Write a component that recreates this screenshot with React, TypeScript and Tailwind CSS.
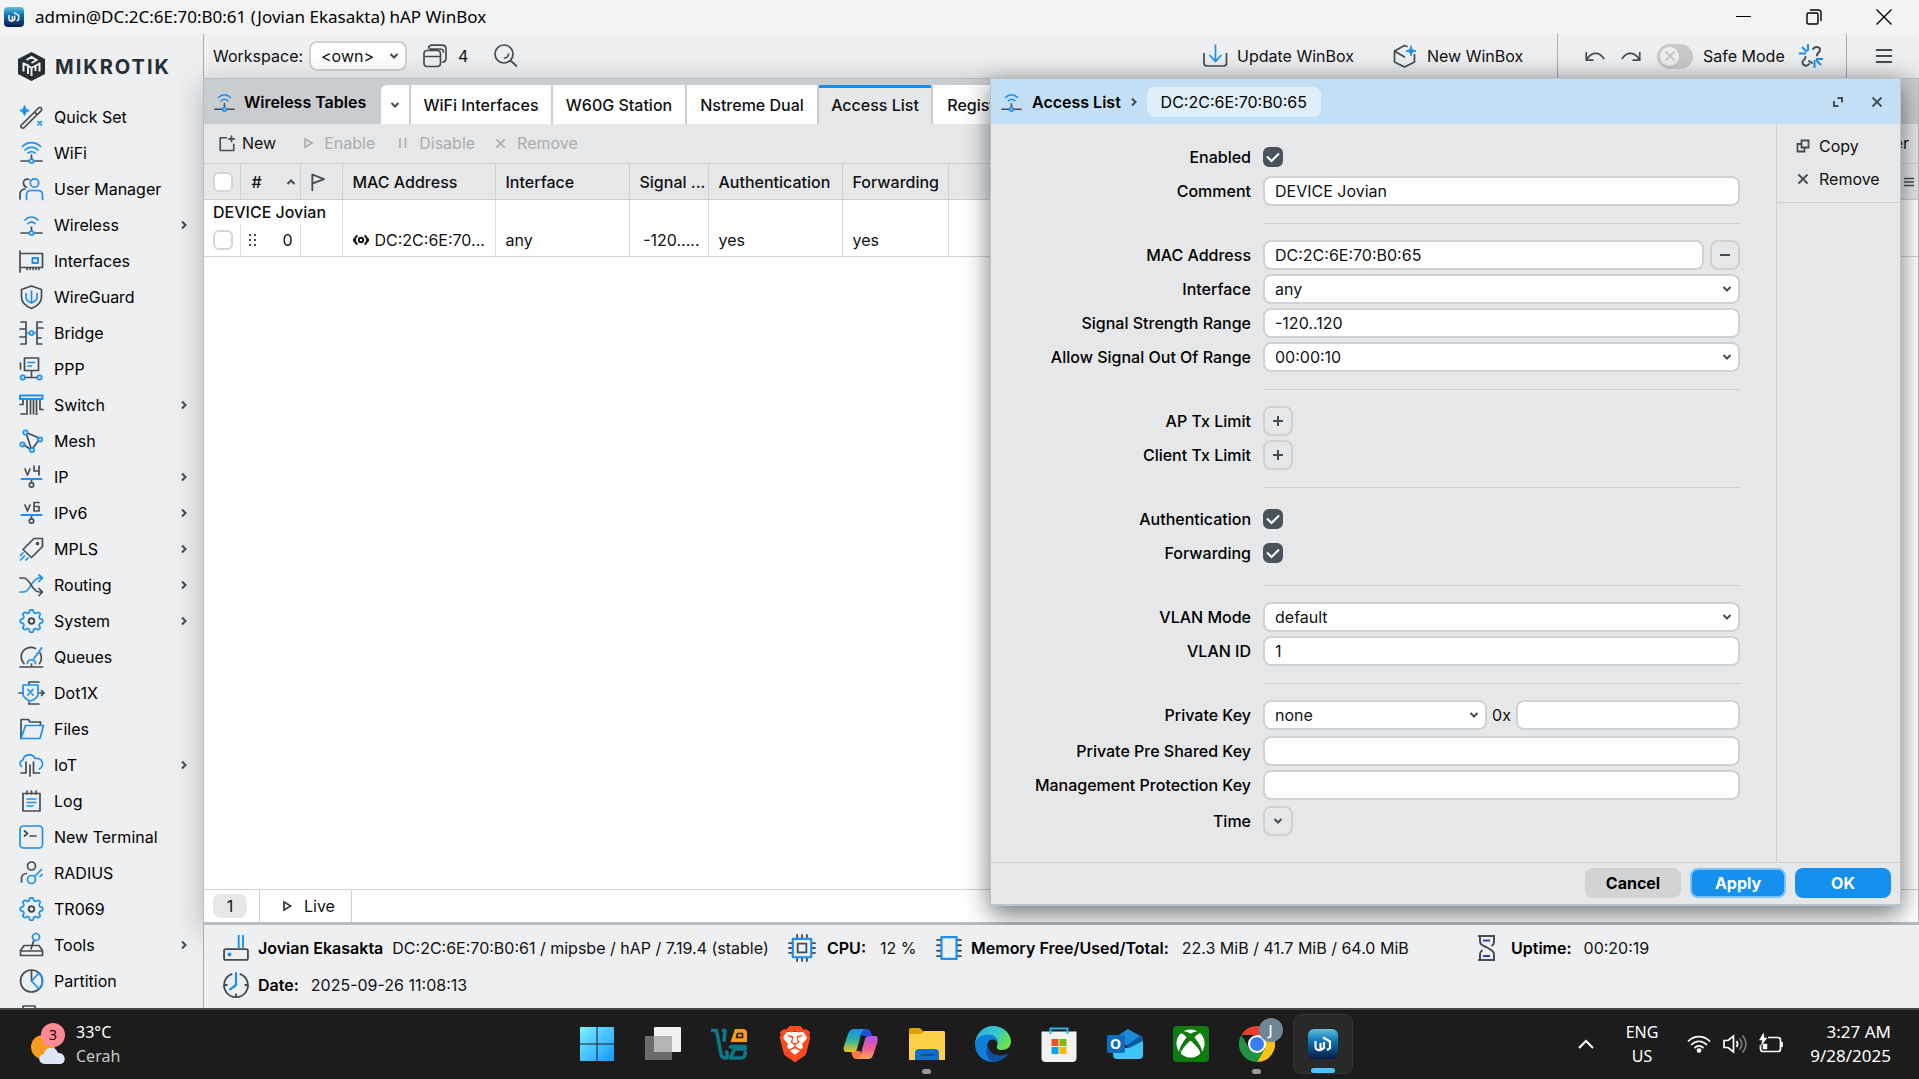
import React from "react";
import { SiBrave } from "react-icons/si";
import { FaXbox } from "react-icons/fa";

const DARK = "#434d56";
const BLUE = "#1b90f0";

type IconProps = { children: React.ReactNode; className?: string };

function Icon({ children, className = "h-6 w-6" }: IconProps) {
  return (
    <svg
      viewBox="0 0 24 24"
      className={`shrink-0 overflow-visible ${className}`}
      fill="none"
      stroke={DARK}
      strokeWidth="1.7"
      strokeLinecap="round"
      strokeLinejoin="round"
      aria-hidden="true"
    >
      {children}
    </svg>
  );
}

function AntennaIcon({ className, wide = false }: { className?: string; wide?: boolean }) {
  return (
    <Icon className={className}>
      <path d="M2 20h8M15 20h8M12.5 14v4" />
      <g stroke={BLUE}>
        {wide ? (
          <path d="M3.500 5.500C8.500 .3 16.500 .3 21.500 5.500M6 9c3.800-3.800 9.200-3.800 13 0M9 12.200c2.200-2 4.800-2 7 0" />
        ) : (
          <path d="M6 7c3.800-4 9.200-4 13 0M9 10.700c2.200-2.200 4.800-2.200 7 0" />
        )}
        <circle cx="12.500" cy="20" r="2" />
      </g>
    </Icon>
  );
}

// outline of an eight-tooth gear, sampled round the circle
const gearPoints = Array.from({ length: 96 }, (_, i) => {
  const a = (i / 96) * Math.PI * 2;
  const r = 9.9 + 1.4 * Math.tanh(2.2 * Math.cos(8 * a));
  return `${(12.5 + r * Math.cos(a)).toFixed(2)},${(12 + r * Math.sin(a)).toFixed(2)}`;
}).join(" ");

function GearIcon() {
  return (
    <Icon>
      <polygon points={gearPoints} stroke={BLUE} />
      <circle cx="12.500" cy="12" r="2.800" strokeWidth="2" />
    </Icon>
  );
}

const quickSetIcon = (
  <Icon>
    <path d="M2.500 20 19.500 3a1.800 1.800 0 0 1 2.700 2.700L5.200 22.500a1.800 1.800 0 0 1-2.700-2.500zM15.500 7l2.700 2.700" />
    <path stroke={BLUE} strokeWidth="1.500" fill={BLUE} d="M5.500 1c.4 3 1.400 4 4.200 4.500C7 6 6 7 5.500 10 5 7 4 6 1.300 5.500 4 5 5 4 5.500 1z" />
    <path stroke={BLUE} d="m19 16.500 3.500 3.500M22.500 16.500 19 20" />
  </Icon>
);

const usersIcon = (
  <Icon>
    <path d="M10 2.500C6.500 1 4 3.500 4.500 6.500c.3 2 1.500 3.300 3 3.700M1 22v-4.500C1 14 3 12.300 6 12" />
    <g stroke={BLUE}>
      <circle cx="15.500" cy="6" r="4.200" />
      <path d="M7.500 22.500V18c0-2.800 2-4.500 4.500-4.500h7c2.700 0 4.500 1.700 4.500 4.500v4.500" />
    </g>
  </Icon>
);

const interfacesIcon = (
  <Icon>
    <path d="M1 2v21M1 4.500h22.500v14H20v2M1 18.500h7v2M11 18.500v2M14 18.500v2M17 18.500v2M8 18.500h12" />
    <path stroke={BLUE} strokeWidth="2" d="M13.500 9h5.500v5h-5.500z" />
  </Icon>
);

const wireGuardIcon = (
  <Icon>
    <path d="M12.500 1 22.500 4.500V12c0 5.500-4 9-10 11.500C6.500 21 2.500 17.500 2.500 12V4.500z" />
    <path stroke={BLUE} d="M12.500 6v12M7 8.500V12c0 3 2.500 5 5.500 6 3-1 5.500-3 5.500-6V8.500" />
  </Icon>
);

const bridgeIcon = (
  <Icon>
    <path d="M2 1h5v22H2M1 8h6M1 16h6M23 1h-5v22h5M18 7h6M18 17h4" />
    <g stroke={BLUE}>
      <path d="M8 12h2M15 12h2" />
      <circle cx="12.500" cy="12" r="2" />
    </g>
  </Icon>
);

const pppIcon = (
  <Icon>
    <path d="M5.500 1h14v12.500h-14zM1.500 6v6M12.500 14v5M6 20.500h12" />
    <g stroke={BLUE}>
      <path d="M9 5.500h6.500M9 9h3.500" />
      <circle cx="3.700" cy="20.500" r="2.200" />
      <circle cx="20.500" cy="20.500" r="2.200" />
    </g>
  </Icon>
);

const switchIcon = (
  <Icon>
    <path d="M4 7v4.500H1M8 7v14H2M11.500 7v14M14.500 7v14M17.500 7v14M21 7v9.500h3M17 21h1" />
    <path stroke={BLUE} strokeWidth="2" d="M1 2.500h22.500V6H1z" />
  </Icon>
);

const meshIcon = (
  <Icon>
    <path d="M7.500 5.500 12 19M8.500 4l11.500 5M19.500 11.500 14 19M5 16l6 4" />
    <g stroke={BLUE}>
      <circle cx="6.500" cy="3.500" r="2.200" />
      <circle cx="21" cy="10.500" r="2.200" />
      <circle cx="3.500" cy="15.500" r="2.200" />
      <circle cx="13" cy="21" r="2.200" />
    </g>
  </Icon>
);

const ipIcon = (
  <Icon>
    <path d="m6 4 2.500 6L11 4M15 1v5h5M20 1v9M12.500 15v2" />
    <circle cx="12.500" cy="20" r="2.200" />
    <path stroke={BLUE} strokeWidth="2" d="M2.500 14h20" />
  </Icon>
);

const ipv6Icon = (
  <Icon>
    <path d="m6 4 2.500 6L11 4M20 1.500h-5V10h5V5.500h-5M12.500 15v2" />
    <circle cx="12.500" cy="20" r="2.200" />
    <path stroke={BLUE} strokeWidth="2" d="M2.500 14h20" />
  </Icon>
);

const mplsIcon = (
  <Icon>
    <path d="M15 1.500h8.500v8L12.500 20.500 4 12.500z" />
    <circle cx="18.500" cy="6.500" r="1" />
    <path stroke={BLUE} d="M4 16l-2.500 2.500M5.500 19l-4 4M9 21l-2 2" />
  </Icon>
);

const routingIcon = (
  <Icon>
    <path stroke={BLUE} d="M1 19h4c6 0 8-14 15-14h3M20 2l3.500 3L20 8.500" />
    <path d="M1 5h4c6 0 8 14 15 14h3M20 15.500l3.500 3.500L20 22.500" />
  </Icon>
);

const queuesIcon = (
  <Icon>
    <path d="M5 18.500C.5 13 1.500 6 8 3.200c3-1.200 6-.9 8.500.3M21 8c2 3.500 1.700 7.500-.5 10.500M1 22h22.500M12.500 19v3" />
    <path stroke={BLUE} d="M8.500 18.500c0-5 7.500-5 8 0M15 13.500 22.500 3" />
  </Icon>
);

const dot1xIcon = (
  <Icon>
    <path d="M10 3V1h10M10 21v2h10M0 12h4M20.500 12h4M22.500 9.500 25 12l-2.500 2.500" />
    <path stroke={BLUE} d="M4 4h15v8.500c0 3-3 6-7.500 7.500C7 18.500 4 15.500 4 12.500zM9 8.500l5 5.500M14 8.500 9 14" />
  </Icon>
);

const filesIcon = (
  <Icon>
    <path d="M2 21.500V2.500h7.500L11 5h10.500v3" />
    <path stroke={BLUE} d="M6.500 8.500h18l-3.500 13H2z" />
  </Icon>
);

const iotIcon = (
  <Icon>
    <path d="M7 9v11H2M11 12v11M14.500 9v11h6" />
    <path stroke={BLUE} d="M2.500 13.500C0 11 1 7.500 4 7c1-6.500 10-6.500 12-1.500 5-1 8 2.500 7.500 6-.2 2-1.300 3.500-3 4.500" />
  </Icon>
);

const logIcon = (
  <Icon>
    <path d="M4 4.500h17v17.500H4zM8 2v3M12.500 2v3M17 2v3" />
    <path stroke={BLUE} strokeWidth="1.500" d="M8 10h9M8 13.500h9M8 17h6" />
  </Icon>
);

const terminalIcon = (
  <Icon>
    <rect stroke={BLUE} x="1" y="1" width="22.500" height="22" rx="3.500" />
    <path d="m5.500 6 3 2.500-3 2.500M11 11h6" />
  </Icon>
);

const radiusIcon = (
  <Icon>
    <circle cx="12.500" cy="5" r="4" />
    <path d="M2.500 21v-3c0-3 2-5.500 5-5.500" />
    <g stroke={BLUE}>
      <circle cx="12.500" cy="18.500" r="4" />
      <path d="m16 15 6.500-6.500M21 15.500l2-2" />
    </g>
  </Icon>
);

const toolsIcon = (
  <Icon>
    <path d="M1.500 17.500 5 12.500h15l3.500 5v5h-22zM1.500 18h22M12 16l3-9" />
    <circle stroke={BLUE} cx="17" cy="4" r="3.500" />
  </Icon>
);

const partitionIcon = (
  <Icon>
    <circle cx="12.500" cy="12" r="11" />
    <path d="M12.500 1.500V12" />
    <path stroke={BLUE} d="M20 4 12.500 12l7.500 8c4.500-4.500 4.500-11.500 0-16z" />
  </Icon>
);

const clippedIcon = (
  <Icon>
    <path d="M4 1h12v22H4zM16 4h4v19" />
  </Icon>
);

type MenuItem = { label: string; icon: React.ReactNode; nested?: boolean };

const menu: MenuItem[] = [
  { label: "Quick Set", icon: quickSetIcon },
  { label: "WiFi", icon: <AntennaIcon wide /> },
  { label: "User Manager", icon: usersIcon },
  { label: "Wireless", icon: <AntennaIcon />, nested: true },
  { label: "Interfaces", icon: interfacesIcon },
  { label: "WireGuard", icon: wireGuardIcon },
  { label: "Bridge", icon: bridgeIcon },
  { label: "PPP", icon: pppIcon },
  { label: "Switch", icon: switchIcon, nested: true },
  { label: "Mesh", icon: meshIcon },
  { label: "IP", icon: ipIcon, nested: true },
  { label: "IPv6", icon: ipv6Icon, nested: true },
  { label: "MPLS", icon: mplsIcon, nested: true },
  { label: "Routing", icon: routingIcon, nested: true },
  { label: "System", icon: <GearIcon />, nested: true },
  { label: "Queues", icon: queuesIcon },
  { label: "Dot1X", icon: dot1xIcon },
  { label: "Files", icon: filesIcon },
  { label: "IoT", icon: iotIcon, nested: true },
  { label: "Log", icon: logIcon },
  { label: "New Terminal", icon: terminalIcon },
  { label: "RADIUS", icon: radiusIcon },
  { label: "TR069", icon: <GearIcon /> },
  { label: "Tools", icon: toolsIcon, nested: true },
  { label: "Partition", icon: partitionIcon },
];

function Chevron({ className = "" }: { className?: string }) {
  return (
    <svg viewBox="0 0 10 10" className={`h-[10px] w-[10px] shrink-0 ${className}`} fill="none" stroke={DARK} strokeWidth="2" aria-hidden="true">
      <path d="M1.500 3 5 6.500 8.500 3" />
    </svg>
  );
}

function Cross({ className = "h-3 w-3" }: { className?: string }) {
  return (
    <svg viewBox="0 0 12 12" className={`shrink-0 ${className}`} fill="none" stroke="currentColor" strokeWidth="1.800" aria-hidden="true">
      <path d="m1.500 1.500 9 9M10.500 1.500l-9 9" />
    </svg>
  );
}

function WinBoxMark({ className }: { className: string }) {
  return (
    <svg viewBox="0 0 30 30" className={`shrink-0 ${className}`} aria-hidden="true">
      <defs>
        <linearGradient id="winbox" x1="0" y1="0" x2="0" y2="1">
          <stop offset="0" stopColor="#5fc0dc" />
          <stop offset=".4" stopColor="#1173b4" />
          <stop offset="1" stopColor="#071a45" />
        </linearGradient>
      </defs>
      <rect width="30" height="30" rx="6" fill="url(#winbox)" />
      <path d="M7.500 12v5.500c0 2.500 2 4 5 3.500V14M16 13v6l-2.500 1.500M15 8.500l7 4V19l-3 2" fill="none" stroke="#fff" strokeWidth="2.200" />
    </svg>
  );
}

function TitleBar() {
  return (
    <header className="flex h-[34px] shrink-0 items-center bg-[#f3f3f3] font-['Noto_Sans',sans-serif] text-black">
      <div className="flex flex-1 items-center gap-[11px] pl-1">
        <WinBoxMark className="h-5 w-5" />
        <h1 className="text-[17px]">admin@DC:2C:6E:70:B0:61 (Jovian Ekasakta) hAP WinBox</h1>
      </div>
      <button aria-label="Minimize" className="flex h-full w-[70px] items-center justify-center">
        <svg viewBox="0 0 16 16" className="h-4 w-4" stroke="#000" fill="none"><path d="M0 7.500h15" /></svg>
      </button>
      <button aria-label="Restore" className="flex h-full w-[70px] items-center justify-center">
        <svg viewBox="0 0 16 16" className="h-4 w-4" stroke="#000" strokeWidth="1.400" fill="none">
          <rect x="1" y="4" width="11" height="11" rx="1.500" />
          <path d="M4 1h8.500A2.500 2.500 0 0 1 15 3.500V12" />
        </svg>
      </button>
      <button aria-label="Close" className="flex h-full w-[70px] items-center justify-center">
        <svg viewBox="0 0 16 16" className="h-4 w-4" stroke="#000" strokeWidth="1.400" fill="none"><path d="m.5.500 15 15M15.500.500l-15 15" /></svg>
      </button>
    </header>
  );
}

function Sidebar() {
  return (
    <aside className="flex w-[203px] shrink-0 flex-col overflow-hidden bg-[#eeeff1]">
      <div className="flex h-[65px] shrink-0 items-center gap-[10px] pl-[18px]">
        <svg viewBox="0 0 27 29" className="h-[29px] w-[27px] shrink-0" aria-hidden="true">
          <path d="M13.500 0 27 7v15l-13.500 7L0 22V7z" fill="#262e36" />
          <path d="M5.500 10.500v9M5.500 11.500l4.500 2v8.500M10 13.500l3.500 2.500v8M21.500 10.500v9M21.500 11.500l-8 4.500M17.500 14v5M8.500 8l5-3 5 3-5 3" stroke="#eeeff1" strokeWidth="2" fill="none" />
        </svg>
        <span className="text-xl font-bold tracking-widest text-[#262e36]">MIKROTIK</span>
      </div>
      <nav>
        <ul>
          {menu.map((item) => (
            <li key={item.label}>
              <a href="#" className="flex h-9 items-center pl-[19px] pr-[14px] text-black">
                {item.icon}
                <span className="ml-[11px] flex-1">{item.label}</span>
                {item.nested && <Chevron className="-rotate-90" />}
              </a>
            </li>
          ))}
          <li className="h-9 pl-[19px] pt-[6px]">{clippedIcon}</li>
        </ul>
      </nav>
    </aside>
  );
}

function TopToolbar() {
  return (
    <div className="flex h-11 shrink-0 items-center border-l border-[#a9adb2] bg-[#eeeff1] pl-[9px]">
      <label htmlFor="workspace" className="w-24">Workspace:</label>
      <div className="relative w-[98px]">
        <select id="workspace" className="block h-[30px] w-full appearance-none rounded-lg border-2 border-[#cfd2d5] bg-white pl-[10px]">
          <option>&lt;own&gt;</option>
        </select>
        <Chevron className="pointer-events-none absolute right-2 top-[10px]" />
      </div>
      <button className="ml-4 flex items-center gap-[11px]">
        <Icon>
          <path d="M1 9.500C1 7.500 2.500 6.500 4 6.500h10c2 0 3.500 1.500 3.500 3.500v9c0 2-1.500 3.500-3.500 3.500H4.500C2.500 22.500 1 21 1 19zM1 12.500h16.500M5.500 4C6 2 7 1.200 9 1.200h10c2.500 0 4 1.500 4 3.500v9.500c0 2-1 3.500-3 4M7 5h10c2 0 3.500 1.200 3.500 3" />
        </Icon>
        4
      </button>
      <button aria-label="Search" className="ml-[26px]">
        <Icon>
          <circle cx="10" cy="10" r="9" />
          <path d="m16.500 16.500 6 5.500M14.500 10c0 2-1.500 4-4 4" />
        </Icon>
      </button>
      <div className="ml-auto flex h-full items-center">
        <button className="flex w-[190px] items-center gap-[10px]">
          <Icon>
            <path d="M1 9v10c0 2 1 3 3 3h16.500c2 0 3-1 3-3V9" strokeLinecap="butt" />
            <path stroke={BLUE} d="M12.500 1v16M7 11.500l5.500 6 5.500-6" />
          </Icon>
          Update WinBox
        </button>
        <button className="flex w-[164px] items-center gap-[10px]">
          <Icon>
            <path d="M14 2.500 11.500 1.500 1.500 7v11l10 5 10-5v-7.500M1.500 7l10 6" />
            <path stroke={BLUE} fill={BLUE} strokeWidth="1" d="M18 2c.5 3.500 1.500 4 5 5-3.500.500-4.500 1.500-5 5-.5-3.500-1.500-4.500-5-5 3.500-1 4.500-1.500 5-5z" />
          </Icon>
          New WinBox
        </button>
        <div className="flex h-full items-center border-l border-[#a9adb2] pl-[27px]">
          <button aria-label="Undo">
            <Icon className="h-5 w-5"><path strokeWidth="2" d="M1.500 8v9h8M2 16.500C7 7 17 6 22.500 15" /></Icon>
          </button>
          <button aria-label="Redo" className="ml-4">
            <Icon className="h-5 w-5"><path strokeWidth="2" d="M22.500 8v9h-8M22 16.500C17 7 7 6 1.500 15" /></Icon>
          </button>
          <label className="ml-4 flex w-[142px] items-center gap-[10px]">
            <span className="relative flex">
              <input type="checkbox" role="switch" className="h-[25px] w-9 appearance-none rounded-full bg-[#c8cacc]" />
              <span className="pointer-events-none absolute left-[3px] top-[3px] flex h-[19px] w-[19px] items-center justify-center rounded-full bg-[#eeeff1] text-[#c8cacc]">
                <Cross />
              </span>
            </span>
            Safe Mode
          </label>
          <button aria-label="Connection">
            <Icon>
              <path strokeWidth="2" d="M14 5c2-3 7-2.500 7 1 0 2.500-3 2.500-3 5.500M10 20c-2 3-7 1.500-6.500-2 .3-2 3-2.500 3-5M13 19l-3-2" />
              <path stroke={BLUE} strokeWidth="2" strokeLinecap="butt" d="M9 0v7M3 3l5 5M0 9.500h7M15.500 16v8M17 16l5 5M17 15h7" />
            </Icon>
          </button>
        </div>
        <div className="ml-[23px] flex h-full items-center border-l border-[#a9adb2] pl-[29px] pr-[27px]">
          <button aria-label="Menu">
            <svg viewBox="0 0 16 16" className="h-4 w-4" stroke={DARK} strokeWidth="2" aria-hidden="true"><path d="M0 2h16M0 8h16M0 14h16" /></svg>
          </button>
        </div>
      </div>
    </div>
  );
}

function RowCheck({ label }: { label: string }) {
  return (
    <input type="checkbox" aria-label={label} className="block h-5 w-5 appearance-none rounded-md border-2 border-[#d3d5d7] bg-white" />
  );
}

function WirelessTables() {
  return (
    <section className="flex h-full flex-col border border-b-[3px] border-[#b6bcc2] bg-white shadow-[0_6px_30px_rgba(0,0,0,0.25)]">
      <div className="flex h-[45px] shrink-0 items-end gap-[2px] overflow-hidden bg-[#cacdd0]">
        <h2 className="flex h-full w-[175px] items-center gap-[9px] pl-[9px] font-semibold text-black">
          <AntennaIcon className="h-[22px] w-[22px]" />
          Wireless Tables
        </h2>
        <button aria-label="More tables" className="flex h-[39px] w-7 items-center justify-center rounded-tl-md bg-white"><Chevron /></button>
        <button className="h-[39px] w-[140px] bg-white font-medium">WiFi Interfaces</button>
        <button className="h-[39px] w-[132px] bg-white font-medium">W60G Station</button>
        <button className="h-[39px] w-[130px] bg-white font-medium">Nstreme Dual</button>
        <button className="h-[39px] w-28 border-t-[3px] border-[#1590ee] bg-[#e6e7e9] pb-[3px] font-medium">Access List</button>
        <button className="h-[39px] w-[120px] bg-white font-medium">Registration</button>
      </div>

      <div className="flex h-[39px] shrink-0 items-center gap-5 bg-[#e6e7e9] pb-[1px] pl-[14px] pr-[9px]">
        <button className="mr-1 flex items-center gap-[6px]">
          <Icon className="h-[18px] w-[18px]"><path strokeWidth="2.200" strokeLinecap="butt" d="M12 5H3v17h18v-9M18 2v9M13.500 6.500h9" /></Icon>
          New
        </button>
        <button className="flex items-center gap-2 text-[#abadb0]" disabled>
          <svg viewBox="0 0 16 16" className="h-4 w-4" fill="none" stroke="currentColor" strokeWidth="1.700"><path d="M5 4v8l7-4z" /></svg>
          Enable
        </button>
        <button className="flex items-center gap-2 text-[#abadb0]" disabled>
          <svg viewBox="0 0 16 16" className="h-4 w-4" stroke="currentColor" strokeWidth="1.700"><path d="M5 3v10M10.500 3v10" /></svg>
          Disable
        </button>
        <button className="flex items-center gap-[11px] text-[#abadb0]" disabled>
          <Cross className="h-[11px] w-[11px]" />
          Remove
        </button>
        <button className="ml-auto">Filter</button>
      </div>

      <table className="w-full table-fixed border-y border-[#d0d2d4] text-left">
        <colgroup>
          <col className="w-9" />
          <col className="w-[60px]" />
          <col className="w-[42px]" />
          <col className="w-[153px]" />
          <col className="w-[134px]" />
          <col className="w-[79px]" />
          <col className="w-[134px]" />
          <col className="w-[106px]" />
          <col />
        </colgroup>
        <thead className="h-9 border-b border-[#cdcfd1] bg-[#e6e7e9]">
          <tr className="divide-x divide-[#cdcfd1]">
            <th className="pl-[9px]"><RowCheck label="Select all" /></th>
            <th className="pl-[11px]">
              <span className="flex items-center justify-between pr-1 font-medium"># <Chevron className="rotate-180" /></span>
            </th>
            <th className="pl-2">
              <Icon className="h-5 w-5"><path strokeWidth="2.200" d="M4 22V3l14 5.500L4 14" /></Icon>
            </th>
            <th className="pl-[10px] font-medium">MAC Address</th>
            <th className="pl-[10px] font-medium">Interface</th>
            <th className="whitespace-nowrap pl-[10px] font-medium">Signal ...</th>
            <th className="pl-[10px] font-medium">Authentication</th>
            <th className="pl-[10px] font-medium">Forwarding</th>
            <th className="pr-1">
              <svg viewBox="0 0 10 10" className="ml-auto h-[10px] w-[10px]" stroke={DARK} strokeWidth="1.500" aria-hidden="true"><path d="M0 1.500h10M0 5h10M0 8.500h10" /></svg>
            </th>
          </tr>
        </thead>
        <tbody>
          <tr className="h-6 divide-x divide-[#dcdee0]">
            <td colSpan={3} className="whitespace-nowrap pl-[9px] font-medium">DEVICE Jovian</td>
            <td /><td /><td /><td /><td /><td />
          </tr>
          <tr className="h-8 divide-x divide-[#dcdee0]">
            <td className="pl-[9px]"><RowCheck label="Select row 0" /></td>
            <td>
              <span className="flex items-center justify-between pl-2 pr-[7px]">
                <svg viewBox="0 0 8 12" className="h-3 w-2" fill={DARK} aria-hidden="true">
                  <path d="M0 0h2v2H0zM5 0h2v2H5zM0 5h2v2H0zM5 5h2v2H5zM0 10h2v2H0zM5 10h2v2H5z" />
                </svg>
                0
              </span>
            </td>
            <td />
            <td className="pl-[10px]">
              <span className="flex items-center gap-[6px] whitespace-nowrap">
                <svg viewBox="0 0 16 12" className="h-3 w-4 shrink-0" fill="none" stroke="#111" strokeWidth="2" aria-hidden="true">
                  <circle cx="8" cy="6" r="2.200" />
                  <path d="M4.500 1.500C1 3.500 1 8.500 4.500 10.500M11.500 1.500c3.500 2 3.500 7 0 9M1 4.500v3M15 4.500v3" />
                </svg>
                DC:2C:6E:70...
              </span>
            </td>
            <td className="pl-[10px]">any</td>
            <td className="whitespace-nowrap pr-2 text-right">-120.....</td>
            <td className="pl-[10px]">yes</td>
            <td className="pl-[10px]">yes</td>
            <td />
          </tr>
        </tbody>
      </table>

      <div className="mt-auto flex h-[33px] shrink-0 items-stretch border-t border-[#cdcfd1]">
        <div className="flex w-14 items-center border-r border-[#cdcfd1] pl-[9px]">
          <span className="flex h-6 w-[34px] items-center justify-center rounded-lg bg-[#e6e7e9]">1</span>
        </div>
        <button className="flex w-[92px] items-center gap-3 border-r border-[#cdcfd1] pl-[22px]">
          <svg viewBox="0 0 10 10" className="h-[10px] w-[10px]" fill="none" stroke={DARK} strokeWidth="2" aria-hidden="true"><path d="M2 1v8l6.500-4z" /></svg>
          Live
        </button>
      </div>
    </section>
  );
}

const fieldBox = "h-[30px] w-full rounded-lg border-2 border-[#cfd2d5] bg-white";
const squareButton = "flex h-[30px] w-[30px] shrink-0 items-center justify-center rounded-lg border-2 border-[#cfd1d3]";

function Row({ label, id, children }: { label: string; id: string; children: React.ReactNode }) {
  return (
    <div className="grid grid-cols-[260px_1fr] items-center gap-x-3">
      <label htmlFor={id} className="text-right font-medium text-black">{label}</label>
      <div className="flex h-[30px] items-center">{children}</div>
    </div>
  );
}

function TextField({ id, value = "" }: { id: string; value?: string }) {
  return <input id={id} type="text" defaultValue={value} className={`${fieldBox} px-[10px]`} />;
}

function SelectField({ id, value }: { id: string; value: string }) {
  return (
    <div className="relative flex-1">
      <select id={id} className={`${fieldBox} block appearance-none px-[10px]`}>
        <option>{value}</option>
      </select>
      <Chevron className="pointer-events-none absolute right-2 top-[10px]" />
    </div>
  );
}

function CheckField({ id }: { id: string }) {
  return (
    <span className="relative flex">
      <input id={id} type="checkbox" defaultChecked className="peer h-5 w-5 appearance-none rounded-md border-2 border-[#cfd2d5] bg-white checked:border-[#4a535c] checked:bg-[#4a535c]" />
      <svg viewBox="0 0 20 20" className="pointer-events-none absolute inset-0 hidden h-5 w-5 peer-checked:block" fill="none" stroke="#fff" strokeWidth="2" aria-hidden="true">
        <path d="m4 9.500 4.500 4.500L16 6.500" />
      </svg>
    </span>
  );
}

function Divider() {
  return <hr className="mb-4 ml-[272px] mt-[17px] border-[#cdcfd1]" />;
}

function Plus() {
  return (
    <svg viewBox="0 0 10 10" className="h-[10px] w-[10px]" stroke={DARK} strokeWidth="2" aria-hidden="true"><path d="M5 0v10M0 5h10" /></svg>
  );
}

function AccessDialog() {
  return (
    <section
      role="dialog"
      aria-label="Access List"
      className="absolute bottom-[19px] right-[18px] top-0 flex w-[911px] max-w-full flex-col border border-b-2 border-[#b9c4cc] bg-[#e6e7e9] shadow-[0_8px_24px_rgba(0,0,0,0.55)]"
    >
      <div className="flex h-[45px] shrink-0 items-center bg-[#c3dff5] pl-[9px] pr-[17px]">
        <AntennaIcon className="h-[22px] w-[22px]" />
        <h2 className="ml-[10px] font-semibold text-black">Access List</h2>
        <Chevron className="mx-2 -rotate-90" />
        <span className="flex h-[30px] w-[174px] items-center justify-center rounded-lg bg-[#e0eef9] text-black">DC:2C:6E:70:B0:65</span>
        <button aria-label="Maximize" className="ml-auto">
          <svg viewBox="0 0 10 10" className="h-[10px] w-[10px]" fill="none" stroke={DARK} strokeWidth="2" aria-hidden="true"><path d="M4.500 1H9v4.500M1 4v5h4.500" /></svg>
        </button>
        <button aria-label="Close" className="ml-7 text-[#434d56]"><Cross /></button>
      </div>

      <div className="flex min-h-0 flex-1">
        <form id="access-form" className="flex-1 overflow-hidden pr-9 pt-[18px]">
          <div className="grid gap-1">
            <Row label="Enabled" id="enabled"><CheckField id="enabled" /></Row>
            <Row label="Comment" id="comment"><TextField id="comment" value="DEVICE Jovian" /></Row>
          </div>
          <Divider />
          <div className="grid gap-1">
            <Row label="MAC Address" id="mac">
              <TextField id="mac" value="DC:2C:6E:70:B0:65" />
              <button type="button" aria-label="Clear MAC Address" className={`${squareButton} ml-[6px]`}>
                <svg viewBox="0 0 10 10" className="h-[10px] w-[10px]" stroke={DARK} strokeWidth="2" aria-hidden="true"><path d="M0 5h10" /></svg>
              </button>
            </Row>
            <Row label="Interface" id="interface"><SelectField id="interface" value="any" /></Row>
            <Row label="Signal Strength Range" id="signal"><TextField id="signal" value="-120..120" /></Row>
            <Row label="Allow Signal Out Of Range" id="allow"><SelectField id="allow" value="00:00:10" /></Row>
          </div>
          <Divider />
          <div className="grid gap-1">
            <Row label="AP Tx Limit" id="ap-tx"><button id="ap-tx" type="button" className={squareButton}><Plus /></button></Row>
            <Row label="Client Tx Limit" id="client-tx"><button id="client-tx" type="button" className={squareButton}><Plus /></button></Row>
          </div>
          <Divider />
          <div className="grid gap-1">
            <Row label="Authentication" id="auth"><CheckField id="auth" /></Row>
            <Row label="Forwarding" id="forwarding"><CheckField id="forwarding" /></Row>
          </div>
          <Divider />
          <div className="grid gap-1">
            <Row label="VLAN Mode" id="vlan-mode"><SelectField id="vlan-mode" value="default" /></Row>
            <Row label="VLAN ID" id="vlan-id"><TextField id="vlan-id" value="1" /></Row>
          </div>
          <Divider />
          <div className="mb-[6px]">
            <Row label="Private Key" id="private-key">
              <SelectField id="private-key" value="none" />
              <label htmlFor="private-key-hex" className="w-[29px] text-center">0x</label>
              <div className="flex-1"><TextField id="private-key-hex" /></div>
            </Row>
          </div>
          <div className="mb-[6px] grid gap-1">
            <Row label="Private Pre Shared Key" id="psk"><TextField id="psk" /></Row>
            <Row label="Management Protection Key" id="mgmt"><TextField id="mgmt" /></Row>
          </div>
          <Row label="Time" id="time"><button id="time" type="button" className={squareButton}><Chevron /></button></Row>
        </form>
        <div className="w-[124px] shrink-0 border-l border-[#cdcfd1]">
          <div className="flex flex-col gap-[9px] border-b border-[#cdcfd1] pb-[11px] pl-[19px] pt-[10px]">
            <button className="flex items-center gap-[9px]">
              <svg viewBox="0 0 14 14" className="h-[14px] w-[14px]" fill="none" stroke={DARK} strokeWidth="1.800" aria-hidden="true">
                <path d="M5.500 1.500h7v7h-7zM5.500 5H1.500v7.500h7v-4" />
              </svg>
              Copy
            </button>
            <button className="flex items-center gap-[10px]">
              <Cross className="ml-[1px] h-3 w-3 text-[#434d56]" />
              Remove
            </button>
          </div>
        </div>
      </div>

      <div className="flex h-[42px] shrink-0 items-start justify-end gap-[9px] border-t border-[#cdcfd1] pr-[9px] pt-[5px] font-bold">
        <button className="h-[30px] w-24 rounded-lg bg-[#d2d3d5] text-black">Cancel</button>
        <button className="h-[30px] w-24 rounded-lg border-2 border-[#7cc3fa] bg-[#1590ee] text-white">Apply</button>
        <button className="h-[30px] w-24 rounded-lg bg-[#1590ee] text-white">OK</button>
      </div>
    </section>
  );
}

function StatusBar() {
  return (
    <footer className="relative flex h-[83px] shrink-0 flex-col gap-[11px] border-l border-[#a9adb2] bg-[#eeeff1] pl-[19px] pt-[10px]">
      <div className="flex h-[26px] items-center whitespace-nowrap">
        <div className="flex w-[566px] items-center">
          <Icon className="h-[26px] w-[26px]">
            <rect x="1" y="13" width="22" height="10" rx="1.500" />
            <circle cx="6" cy="18" r="1" stroke={BLUE} fill={BLUE} />
            <path stroke={BLUE} strokeLinecap="butt" d="M14.500 0v12M18.500 0v12" />
          </Icon>
          <span className="ml-[9px] font-semibold text-black">Jovian Ekasakta</span>
          <span className="ml-[9px]">DC:2C:6E:70:B0:61 / mipsbe / hAP / 7.19.4 (stable)</span>
        </div>
        <div className="flex w-[147px] items-center">
          <Icon className="h-[26px] w-[26px]">
            <path d="M7.500 0v3M12 0v3M16.500 0v3M7.500 21v3M12 21v3M16.500 21v3M0 7.500h3M0 12h3M0 16.500h3M21 7.500h3M21 12h3M21 16.500h3M8 8h8v8H8z" />
            <path stroke={BLUE} strokeWidth="2" d="M3.500 3.500h17v17h-17z" />
          </Icon>
          <span className="ml-3 font-semibold text-black">CPU:</span>
          <span className="ml-[14px]">12 %</span>
        </div>
        <div className="flex w-[541px] items-center">
          <Icon className="h-[26px] w-[26px]">
            <path d="M1 4.500h4M1 9.500h4M1 14.500h4M1 19.500h4M19 4.500h4M19 9.500h4M19 14.500h4M19 19.500h4" />
            <path stroke={BLUE} strokeWidth="2" d="M5 2h14v20H5z" />
          </Icon>
          <span className="ml-[9px] font-semibold text-black">Memory Free/Used/Total:</span>
          <span className="ml-[13px]">22.3 MiB / 41.7 MiB / 64.0 MiB</span>
        </div>
        <div className="flex items-center">
          <svg viewBox="0 0 20 26" className="h-[26px] w-5" fill="none" stroke={DARK} strokeWidth="2" aria-hidden="true">
            <path d="M1 1h17M1 25h17M3 1v5c0 5 4 4.500 7 6.500 4 2.500 7 3 7 7.500v5M17 1v6c0 2-1 3-2.500 4M3 25v-6c0-2 1-3 2.500-4" />
            <path stroke="#2b3fae" d="M6 5.500h7M6 21h7" />
          </svg>
          <span className="ml-[14px] font-semibold text-black">Uptime:</span>
          <span className="ml-3">00:20:19</span>
        </div>
      </div>
      <div className="flex h-[26px] items-center whitespace-nowrap">
        <Icon className="h-[26px] w-[26px]">
          <path d="M16 2a11 11 0 1 1-8 0M1 12h2.500M20.500 12H23M12 20.500V23" />
          <path stroke={BLUE} strokeWidth="2" d="M12 1v11l-5.500 4" />
        </Icon>
        <span className="ml-[9px] font-semibold text-black">Date:</span>
        <span className="ml-3">2025-09-26 11:08:13</span>
      </div>
    </footer>
  );
}

type TaskbarApp = { name: string; art: React.ReactNode; running?: boolean; active?: boolean };

const taskbarApps: TaskbarApp[] = [
  {
    name: "Start",
    art: (
      <svg viewBox="0 0 36 36" className="h-9 w-9">
        <defs>
          <linearGradient id="start" x1="0" y1="0" x2="36" y2="36" gradientUnits="userSpaceOnUse">
            <stop offset="0" stopColor="#7ff3ff" />
            <stop offset="1" stopColor="#1195ff" />
          </linearGradient>
        </defs>
        <path fill="url(#start)" d="M1 1h16.500v16.500H1zM18.500 1H35v16.500H18.500zM1 18.500h16.500V35H1zM18.500 18.500H35V35H18.500z" />
      </svg>
    ),
  },
  {
    name: "Task View",
    art: (
      <svg viewBox="0 0 36 36" className="h-9 w-9">
        <rect x="9" y="1" width="27" height="25" rx="1" fill="#f1f1f1" />
        <rect x="0" y="10" width="27" height="24" rx="1" fill="#6b6b6b" />
        <path d="M9 10h18v16H9z" fill="#b5b5b5" />
      </svg>
    ),
  },
  {
    name: "VirtualBox",
    art: (
      <svg viewBox="0 0 36 36" className="h-9 w-9" fill="none" strokeWidth="3.600" strokeLinejoin="round">
        <path stroke="#0f7686" d="M0 4.500h5.500L10 28c.6 3 1.800 4 4 4s2.500-1.500 2-4l-.8-3.500M11 4.500h3l-1 11M19 22.500l1-2h14.200v2.500H23.500L19.500 32H30c2 0 3.500-1 4-3.500l.5-3.500" />
        <path fill="#f59a1b" d="M24 3h8c2.500 0 4 1.500 4 4v9H19.500z" />
        <path stroke="#1c1c1c" strokeWidth="1.600" d="M26.500 7.500h5v4h-6z" />
      </svg>
    ),
  },
  {
    name: "Brave",
    art: (
      <span className="relative flex">
        <svg viewBox="0 0 36 36" className="h-9 w-9"><path fill="#fff" d="M8 6h20l3 7-5 16-8 5-8-5L5 13z" /></svg>
        <SiBrave className="absolute inset-0 h-9 w-9 text-[#fb4a1d]" />
      </span>
    ),
  },
  {
    name: "Copilot",
    art: (
      <svg viewBox="0 0 36 36" className="h-9 w-9">
        <defs>
          <linearGradient id="copA" x1="0" y1="0" x2="0" y2="1">
            <stop offset="0" stopColor="#1a8df0" />
            <stop offset=".5" stopColor="#2fb5a0" />
            <stop offset="1" stopColor="#f5c51b" />
          </linearGradient>
          <linearGradient id="copB" x1="0" y1="0" x2="0" y2="1">
            <stop offset="0" stopColor="#a855f0" />
            <stop offset=".5" stopColor="#f0579a" />
            <stop offset="1" stopColor="#fba25c" />
          </linearGradient>
        </defs>
        <path fill="#1d4fd8" d="M15 3h9c3 0 4 3 5 7h-8c-3 0-5-3-6-7z" />
        <path fill="#f47a42" d="M8 25h9l4 8h-8c-3 0-4-4-5-8z" />
        <path fill="url(#copA)" d="M11 3h11c-3 1-4 4-5 9l-3 11c-.5 2-1.500 3-4 3H4c-3 0-4-2-3-6l4-12c1-3 3-5 6-5z" />
        <path fill="url(#copB)" d="M25 33H14c3-1 4-4 5-9l3-11c.5-2 1.500-3 4-3h6c3 0 3 2 2.500 6l-4 12c-1 3-2.500 5-5.500 5z" />
      </svg>
    ),
  },
  {
    name: "File Explorer",
    running: true,
    art: (
      <svg viewBox="0 0 36 36" className="h-9 w-9">
        <path fill="#e0a100" d="M0 4c0-1 .5-2 2-2h9l4 4-3 5H0z" />
        <path fill="#ffd04a" d="M0 8h12l3-3h19c1.500 0 2 .5 2 2v27H0z" />
        <path fill="#0f6fc5" d="M6 34v-7c0-2.500 1.500-4 4-4h16c2.500 0 4 1.500 4 4v7z" />
        <path stroke="#0a4a8c" strokeWidth="1.500" d="M11 29h14" />
      </svg>
    ),
  },
  {
    name: "Edge",
    art: (
      <svg viewBox="0 0 36 36" className="h-9 w-9">
        <defs>
          <linearGradient id="edge" x1="0" y1="0" x2="1" y2=".5">
            <stop offset="0" stopColor="#2fa8ee" />
            <stop offset=".6" stopColor="#35c6c4" />
            <stop offset="1" stopColor="#6be34b" />
          </linearGradient>
        </defs>
        <path fill="url(#edge)" d="M18 0c10 0 18 7.500 18 15.500 0 5-4 8.500-9 8.500-4.500 0-6-2-5-4 2-5-2-9-8-9C7 11 2 14 0 19 0 8 8 0 18 0z" />
        <path fill="#0e7fd8" d="M0 18c1-6 6-9.500 13-9.500 6 0 10 3.500 9.500 8-1-2-3-3-5-3-4 0-6 4-5 9 1 6 5 10 9 13C9 38 0 29 0 18z" />
        <path fill="#134f9e" d="M13 20c1 6 6 9.500 12 9.500 3.500 0 6-1 8.500-2.500-3 6-9 9-16 9-6-3-8-12-4.500-16z" />
      </svg>
    ),
  },
  {
    name: "Microsoft Store",
    art: (
      <svg viewBox="0 0 36 36" className="h-9 w-9">
        <path fill="#f3f3f3" d="M.5 5.500h35V32c0 2.500-1.500 4-4 4h-27c-2.500 0-4-1.500-4-4z" />
        <path fill="none" stroke="#2cb0ec" strokeWidth="2" d="M9.500 8V2.500h17V8" />
        <path fill="#f25022" d="M10.500 13h7v7h-7z" />
        <path fill="#7fba00" d="M18.500 13h7v7h-7z" />
        <path fill="#00a4ef" d="M10.500 21h7v7h-7z" />
        <path fill="#ffb900" d="M18.500 21h7v7h-7z" />
      </svg>
    ),
  },
  {
    name: "Outlook",
    art: (
      <span className="relative flex">
        <svg viewBox="0 0 36 36" className="h-9 w-9">
          <path fill="#1a8ad8" d="M7 12 21 3l14 8v8H7z" />
          <path fill="#0c59a4" d="M19 20 34 9l2 3v4L22 25z" />
          <path fill="#3cc5f5" d="M6 22h16l14-7v14c0 2.500-1.500 4-4 4H10c-2.500 0-4-1.500-4-4z" />
          <rect x="0" y="9" width="18" height="18" rx="2" fill="#0f6cbd" />
        </svg>
        <span className="absolute left-0 top-[9px] w-[18px] text-center text-sm font-bold leading-[18px] text-white">O</span>
      </span>
    ),
  },
  {
    name: "Xbox",
    art: (
      <span className="flex h-9 w-9 items-center justify-center rounded-sm bg-[#107c10]">
        <FaXbox className="h-[29px] w-[29px] text-white" />
      </span>
    ),
  },
  {
    name: "Chrome",
    running: true,
    art: (
      <span className="relative flex">
        <svg viewBox="0 0 36 36" className="h-9 w-9">
          <path fill="#e8402f" d="M2.400 9A18 18 0 0 1 33.600 9H18z" />
          <path fill="#fbc116" d="M33.600 9A18 18 0 0 1 18 36l7.800-13.500L18 9z" />
          <path fill="#229342" d="M2.400 9A18 18 0 0 0 18 36l7.800-13.500H10.200z" />
          <circle cx="18" cy="18" r="9" fill="#fff" />
          <circle cx="18" cy="18" r="7" fill="#3a7df0" />
        </svg>
        <span className="absolute -right-2 -top-2 h-6 w-6 rounded-full bg-[#6f8794] text-center text-sm font-medium leading-6 text-white">J</span>
      </span>
    ),
  },
  { name: "WinBox", active: true, art: <WinBoxMark className="h-[30px] w-[30px]" /> },
];

function Taskbar() {
  return (
    <footer className="grid h-[71px] shrink-0 grid-cols-[1fr_auto_1fr] border-t-2 border-[#444] bg-[#1c1c1c] pb-[2px] font-['Noto_Sans',sans-serif] text-white">
      <button className="flex items-center gap-[11px] pl-[30px] text-left">
        <span className="relative flex">
          <svg viewBox="0 0 35 42" className="h-[42px] w-[35px]">
            <circle cx="13" cy="24" r="12" fill="#f79a1e" />
            <path fill="#dfe6f5" d="M15 41c-7 0-8-9-1-10 1-8 12-8 14-1 8-1 9 11 2 11z" />
          </svg>
          <span className="absolute right-0 top-0 h-6 w-6 rounded-full bg-[#ff8a96] text-center text-sm leading-6 text-black">3</span>
        </span>
        <span className="flex flex-col leading-6">
          <span>33°C</span>
          <span className="text-[#c8c8c8]">Cerah</span>
        </span>
      </button>

      <div className="flex items-center gap-[6px]">
        {taskbarApps.map((app) => (
          <button
            key={app.name}
            aria-label={app.name}
            className={`relative flex h-[60px] w-[60px] items-center justify-center rounded-lg ${app.active ? "border border-[#333] bg-[#292929]" : ""}`}
          >
            {app.art}
            {app.running && <span className="absolute bottom-0 h-[5px] w-[9px] rounded-full bg-[#9a9a9a]" />}
            {app.active && <span className="absolute bottom-0 h-[5px] w-6 rounded-full bg-[#4cc2ff]" />}
          </button>
        ))}
      </div>

      <div className="flex items-center justify-end pr-7">
        <button aria-label="Hidden icons">
          <svg viewBox="0 0 16 10" className="h-[10px] w-4" fill="none" stroke="#fff" strokeWidth="2"><path d="m1 9 7-7 7 7" /></svg>
        </button>
        <button className="ml-[30px] w-9 text-center leading-6">ENG US</button>
        <button aria-label="Network, sound and battery" className="ml-[27px] flex gap-3">
          <svg viewBox="0 0 24 24" className="h-6 w-6" fill="none" stroke="#fff" strokeWidth="1.700">
            <path d="M1 9.500c6-6.500 16-6.500 22 0M4 13c5-5 11-5 16 0M7.500 16c3-2.700 6-2.700 9 0" />
            <circle cx="12" cy="18.500" r="1.500" fill="#fff" />
          </svg>
          <svg viewBox="0 0 24 24" className="h-6 w-6" fill="none" stroke="#fff" strokeWidth="1.700">
            <path d="M1 8.500h4L10.500 4v16L5 15.500H1zM13.500 9c1.500 2 1.500 4 0 6" />
            <path stroke="#777" d="M16.500 6.500c3 3.500 3 7.500 0 11M19.500 3.500c4.500 5 4.500 12 0 17" />
          </svg>
          <svg viewBox="0 0 24 24" className="h-6 w-6" fill="none" stroke="#fff" strokeWidth="1.700">
            <path d="M9 5.500h10c1.500 0 2.500 1 2.500 2.500v9c0 1.500-1 2.500-2.500 2.500H4c-1.500 0-2.500-1-2.500-2.500V13M23 10v5" />
            <path fill="#fff" strokeWidth=".5" d="M4.500 1 .5 8h3L2.500 13 8 6H5zM4 12h4v5H4z" />
          </svg>
        </button>
        <button className="ml-5 w-[88px] whitespace-nowrap text-right text-[17px] leading-6">
          3:27 AM<br />9/28/2025
        </button>
      </div>
    </footer>
  );
}

export default function App() {
  return (
    <div className="flex h-screen flex-col overflow-hidden font-['Inter',sans-serif] text-base text-[#111]">
      <TitleBar />
      <div className="flex min-h-0 flex-1">
        <Sidebar />
        <main className="flex min-w-0 flex-1 flex-col">
          <TopToolbar />
          <div className="relative min-h-0 flex-1">
            <WirelessTables />
            <AccessDialog />
          </div>
          <StatusBar />
        </main>
      </div>
      <Taskbar />
    </div>
  );
}
